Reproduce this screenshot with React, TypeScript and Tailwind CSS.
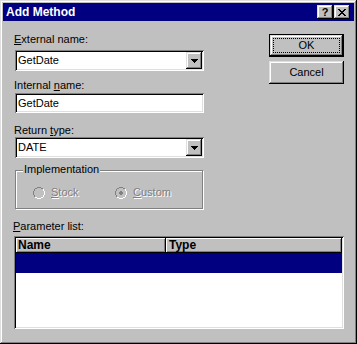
import React from "react";

const raised =
  "shadow-[inset_-1px_-1px_0_#000,inset_1px_1px_0_#dfdfdf,inset_-2px_-2px_0_#808080,inset_2px_2px_0_#fff]";
const raisedThin =
  "shadow-[inset_-1px_-1px_0_#000,inset_1px_1px_0_#fff,inset_-2px_-2px_0_#808080]";
const sunken =
  "shadow-[inset_1px_1px_0_#808080,inset_-1px_-1px_0_#fff,inset_2px_2px_0_#000,inset_-2px_-2px_0_#dfdfdf]";

function U({ children }: { children: React.ReactNode }) {
  return <span className="underline underline-offset-[1px]">{children}</span>;
}

function Label({ children }: { children: React.ReactNode }) {
  return (
    <div className="h-[13px] text-[11px] leading-[13px] text-black pl-[-1px] -ml-[1px]">
      {children}
    </div>
  );
}

function Combo({ value }: { value: string }) {
  return (
    <div className={`relative h-[21px] w-[189px] bg-white ${sunken} flex items-center`}>
      <span className="pl-[3px] text-[11px] leading-[13px] text-black">{value}</span>
      <div
        className={`absolute right-[2px] top-[2px] w-[16px] h-[17px] bg-[#c0c0c0] ${raised} flex items-center justify-center`}
      >
        <svg width="7" height="4" viewBox="0 0 7 4" shapeRendering="crispEdges">
          <path d="M0 0h7v1H0zM1 1h5v1H1zM2 2h3v1H2zM3 3h1v1H3z" fill="#000" />
        </svg>
      </div>
    </div>
  );
}

function Radio({ checked }: { checked?: boolean }) {
  return (
    <svg width="12" height="12" viewBox="0 0 12 12" shapeRendering="crispEdges">
      <path d="M4 0h4v1H4zM2 1h2v1H2zM8 1h2v1H8zM1 2h1v2H1zM0 4h1v4H0zM1 8h1v2H1z" fill="#808080" />
      <path d="M10 2h1v2h-1zM11 4h1v4h-1zM10 8h1v2h-1zM2 10h2v1H2zM8 10h2v1H8zM4 11h4v1H4z" fill="#fff" />
      <path d="M4 1h4v1H4zM2 2h2v1H2zM8 2h1v1H8zM1 4h1v4H1zM2 3h1v1H2zM2 8h1v1H2z" fill="#000" opacity="0" />
      {checked && <path d="M5 4h2v1H5zM4 5h4v2H4zM5 7h2v1H5z" fill="#808080" />}
    </svg>
  );
}

export default function App() {
  return (
    <div
      className={`w-[357px] h-[344px] bg-[#c0c0c0] p-[3px] flex flex-col ${raised}`}
      style={{ fontFamily: '"Liberation Sans", Arial, sans-serif' }}
    >
      {/* Title bar */}
      <div className="h-[18px] bg-[#000080] flex items-center justify-between pl-[3px] pr-[4px]">
        <span className="text-white font-bold text-[12px] leading-[14px]">Add Method</span>
        <div className="flex items-center gap-[1px]">
          <div className={`w-[16px] h-[14px] bg-[#c0c0c0] ${raised} flex items-center justify-center`}>
            <span className="text-black font-bold text-[11px] leading-[11px] mt-[1px]">?</span>
          </div>
          <div className={`w-[16px] h-[14px] bg-[#c0c0c0] ${raised} flex items-center justify-center`}>
            <svg width="8" height="7" viewBox="0 0 8 7" shapeRendering="crispEdges">
              <path
                d="M0 0h2v1H0zM6 0h2v1H6zM1 1h2v1H1zM5 1h2v1H5zM2 2h4v1H2zM3 3h2v1H3zM2 4h4v1H2zM1 5h2v1H1zM5 5h2v1H5zM0 6h2v1H0zM6 6h2v1H6z"
                fill="#000"
              />
            </svg>
          </div>
        </div>
      </div>

      {/* Body */}
      <div className="flex">
        <div className="ml-[12px] pt-[12px] w-[189px] flex flex-col">
          <Label>
            <U>E</U>xternal name:
          </Label>
          <div className="mt-[4px]">
            <Combo value="GetDate" />
          </div>
          <div className="mt-[8px]">
            <Label>
              Internal <U>n</U>ame:
            </Label>
          </div>
          <div className={`mt-[1px] h-[20px] w-[189px] bg-white ${sunken} flex items-center`}>
            <span className="pl-[3px] text-[11px] leading-[13px] text-black">GetDate</span>
          </div>
          <div className="mt-[11px]">
            <Label>
              Return <U>t</U>ype:
            </Label>
          </div>
          <div className="mt-0">
            <Combo value="DATE" />
          </div>
          {/* Group box */}
          <div className="relative mt-[12px] h-[39px] w-[188px] border border-[#808080] shadow-[1px_1px_0_#fff,inset_1px_1px_0_#fff]">
            <span className="absolute left-[7px] top-[-8px] bg-[#c0c0c0] px-[1px] text-[11px] leading-[13px] text-black">
              Implementation
            </span>
            <div className="flex items-center pl-[17px] pt-[15px]">
              <div className="flex items-center w-[82px]">
                <Radio />
                <span className="ml-[6px] text-[11px] leading-[13px] text-[#808080] [text-shadow:1px_1px_0_#fff]">
                  <U>S</U>tock
                </span>
              </div>
              <div className="flex items-center">
                <Radio checked />
                <span className="ml-[6px] text-[11px] leading-[13px] text-[#808080] [text-shadow:1px_1px_0_#fff]">
                  <U>C</U>ustom
                </span>
              </div>
            </div>
          </div>
        </div>

        <div className="ml-auto mr-[10px] pt-[13px] flex flex-col gap-[4px]">
          <div className="w-[75px] h-[23px] bg-black p-[1px]">
            <div className={`w-full h-full bg-[#c0c0c0] ${raised} p-[3px]`}>
              <div className="w-full h-full border border-dotted border-black flex items-center justify-center text-[11px] leading-[13px] text-black">
                OK
              </div>
            </div>
          </div>
          <div className={`w-[75px] h-[23px] bg-[#c0c0c0] ${raised} flex items-center justify-center text-[11px] leading-[13px] text-black`}>
            Cancel
          </div>
        </div>
      </div>

      {/* Parameter list */}
      <div className="ml-[11px] mt-[11px]">
        <Label>
          <U>P</U>arameter list:
        </Label>
      </div>
      <div className={`ml-[11px] mt-[3px] w-[330px] h-[93px] bg-white p-[2px] ${sunken} flex flex-col`}>
        <div className="flex h-[15px]">
          <div className={`w-[150px] h-full bg-[#c0c0c0] ${raisedThin} pl-[2px] text-[12px] leading-[15px] font-bold text-black`}>
            Name
          </div>
          <div className={`flex-1 h-full bg-[#c0c0c0] ${raisedThin} pl-[3px] text-[12px] leading-[15px] font-bold text-black`}>
            Type
          </div>
        </div>
        <div className="h-[20px] bg-[#000080]" />
      </div>
    </div>
  );
}
